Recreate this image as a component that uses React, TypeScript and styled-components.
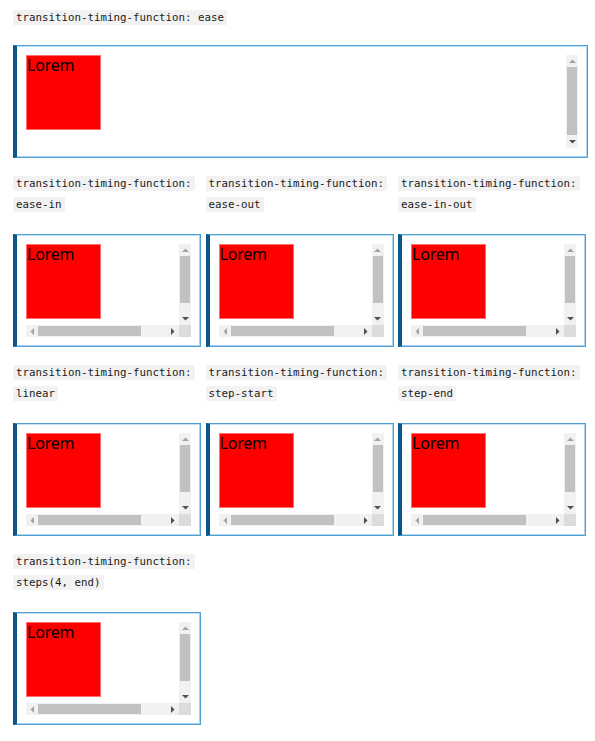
import React from "react";
import styled, { createGlobalStyle } from "styled-components";

const Global = createGlobalStyle`
  html, body { margin: 0; padding: 0; background: #ffffff; }
  body { font-family: "Noto Sans", "Open Sans", sans-serif; color: #1b1b1b; }
  * { box-sizing: border-box; }
`;

const Page = styled.main`
  width: 595px;
  padding: 7px 7px 16px 13px;
  display: flex;
  flex-direction: column;
  gap: 15px;
`;

const Row = styled.div`
  display: grid;
  grid-template-columns: repeat(3, 188px);
  column-gap: 4.5px;
`;

const Section = styled.section<{ $gap: number }>`
  display: flex;
  flex-direction: column;
  gap: ${(p) => p.$gap}px;
  min-width: 0;
`;

const Label = styled.p`
  margin: 0;
  font-family: "DejaVu Sans Mono", "Liberation Mono", monospace;
  font-size: 10.8px;
  line-height: 21px;
`;

const Code = styled.code`
  font-family: inherit;
  font-size: inherit;
  background: #f2f2f2;
  color: #1b1b1b;
  padding: 1px 3px;
  -webkit-box-decoration-break: clone;
  box-decoration-break: clone;
`;

const Frame = styled.div`
  height: 113px;
  border: 1px solid #4d9fd6;
  border-left: 4px solid #0b5785;
  box-shadow: inset -1px 0 #acd2ee, inset 0 -1px #acd2ee, inset 0 1px #c4e0f4;
  padding: 9px;
  background: #ffffff;
  display: flex;
`;

const Scroller = styled.div<{ $both: boolean }>`
  flex: 1;
  height: 93px;
  display: grid;
  grid-template-columns: 1fr 12px;
  grid-template-rows: ${(p) => (p.$both ? "1fr 12px" : "1fr")};
`;

const Content = styled.div`
  overflow: hidden;
`;

const RedBox = styled.div`
  width: 75px;
  height: 75px;
  background: #ff0000;
  border: 1px solid #ff6f6f;
  font-family: "Noto Sans", "Open Sans", sans-serif;
  font-size: 16px;
  line-height: 18px;
  color: #000000;
  letter-spacing: -0.2px;
`;

const VBar = styled.div`
  background: #f1f1f1;
  display: flex;
  flex-direction: column;
`;

const HBar = styled.div`
  background: #f1f1f1;
  display: flex;
  flex-direction: row;
`;

const Corner = styled.div`
  background: #dcdcdc;
`;

const ArrowBtn = styled.div`
  width: 12px;
  height: 12px;
  flex: none;
  display: flex;
  align-items: center;
  justify-content: center;
`;

const VTrack = styled.div`
  flex: 1;
  display: flex;
  flex-direction: column;
  align-items: center;
`;

const HTrack = styled.div`
  flex: 1;
  display: flex;
  flex-direction: row;
  align-items: center;
`;

const VThumb = styled.div<{ $len: number }>`
  width: 10px;
  height: ${(p) => p.$len}px;
  background: #c1c1c1;
`;

const HThumb = styled.div<{ $len: number }>`
  height: 10px;
  width: ${(p) => p.$len}px;
  background: #c1c1c1;
`;

const DIS = "#a3a3a3";
const ACT = "#505050";

type Dir = "up" | "down" | "left" | "right";

const Tri = ({ dir, color }: { dir: Dir; color: string }) => {
  const pts: Record<Dir, string> = {
    up: "0,4 3.5,0.5 7,4",
    down: "0,0 7,0 3.5,3.5",
    left: "4,0 4,7 0.5,3.5",
    right: "0,0 3.5,3.5 0,7",
  };
  const vertical = dir === "up" || dir === "down";
  return (
    <svg width={vertical ? 7 : 4} height={vertical ? 4 : 7} viewBox={vertical ? "0 0 7 4" : "0 0 4 7"}>
      <polygon points={pts[dir]} fill={color} />
    </svg>
  );
};

const Demo = ({ small }: { small: boolean }) => (
  <Frame>
    <Scroller $both={small}>
      <Content>
        <RedBox>Lorem</RedBox>
      </Content>
      <VBar>
        <ArrowBtn>
          <Tri dir="up" color={DIS} />
        </ArrowBtn>
        <VTrack>
          <VThumb $len={small ? 47 : 68} />
        </VTrack>
        <ArrowBtn>
          <Tri dir="down" color={ACT} />
        </ArrowBtn>
      </VBar>
      {small && (
        <>
          <HBar>
            <ArrowBtn>
              <Tri dir="left" color={DIS} />
            </ArrowBtn>
            <HTrack>
              <HThumb $len={103} />
            </HTrack>
            <ArrowBtn>
              <Tri dir="right" color={ACT} />
            </ArrowBtn>
          </HBar>
          <Corner />
        </>
      )}
    </Scroller>
  </Frame>
);

const Item = ({ fn, small }: { fn: string; small: boolean }) => (
  <Section $gap={small ? 19 : 17}>
    <Label>
      <Code>transition-timing-function: {fn}</Code>
    </Label>
    <Demo small={small} />
  </Section>
);

const rows: string[][] = [
  ["ease-in", "ease-out", "ease-in-out"],
  ["linear", "step-start", "step-end"],
  ["steps(4, end)"],
];

export default function App() {
  return (
    <>
      <Global />
      <Page>
        <Item fn="ease" small={false} />
        {rows.map((r, i) => (
          <Row key={i}>
            {r.map((fn) => (
              <Item key={fn} fn={fn} small />
            ))}
          </Row>
        ))}
      </Page>
    </>
  );
}
